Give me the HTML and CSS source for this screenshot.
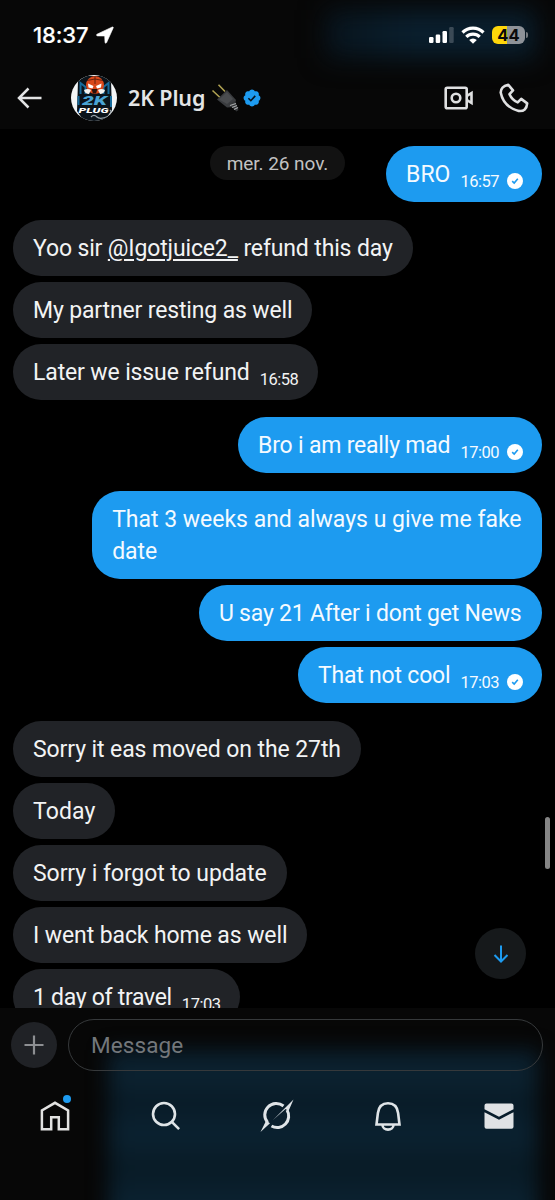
FILE: index.html
```html
<!DOCTYPE html>
<html lang="fr">
<head>
<meta charset="utf-8">
<title>2K Plug</title>
<link rel="stylesheet" href="styles.css">
</head>
<body>
<svg width="0" height="0" class="defs">
  <symbol id="sent" viewBox="0 0 16 16"><circle cx="8" cy="8" r="8" fill="#fff"/><path d="M5.2 8.2 7.2 10.1 10.8 5.8" fill="none" stroke="#1d9bf0" stroke-width="1.6"/></symbol>
</svg>
<div class="app">
  <header class="top">
    <div class="status">
      <span class="clock">18:37</span>
      <svg class="loc" width="18" height="18" viewBox="0 0 18 18"><path d="M1 8.200 16.300 1c.7-.3 1.200.2.900.9L10.600 16.600c-.4.9-1.600.7-1.600-.3L8.700 10 1.600 9.900c-1.100 0-1.500-1.200-.6-1.700z" fill="#fff" stroke="#fff" stroke-width=".6"/></svg>
      <svg class="signal" width="26" height="18" viewBox="0 0 26 18"><g fill="#fff"><rect x="0" y="11" width="4.500" height="6" rx="1.200"/><rect x="6.700" y="8.500" width="4.500" height="8.500" rx="1.200"/><rect x="13.500" y="5" width="4.500" height="12" rx="1.200"/></g><rect x="20.200" y="1" width="4.500" height="16" rx="1.200" fill="#3b4a56"/></svg>
      <svg class="wifi" width="24" height="18" viewBox="0 0 24 18"><g fill="none" stroke="#fff" stroke-width="3.200"><path d="M1.500 6.500a15 15 0 0 1 21 0"/><path d="M5.300 10.900a9.500 9.500 0 0 1 13.400 0"/></g><path d="M12 17.700 8.200 14a5.500 5.500 0 0 1 7.600 0z" fill="#fff"/></svg>
      <div class="battery">44</div><i class="cap"></i>
    </div>
    <div class="bar">
      <svg class="back" width="26" height="22" viewBox="0 0 26 22"><path d="M11.500 1.500 2 11l9.500 9.500M2 11h22.500" fill="none" stroke="#e2e3e4" stroke-width="2.500"/></svg>
      <svg class="avatar" width="46" height="46" viewBox="0 0 46 46">
        <defs><clipPath id="disc"><circle cx="23" cy="23" r="23"/></clipPath></defs>
        <g clip-path="url(#disc)">
          <rect width="46" height="46" fill="#f4f6f7"/>
          <path d="M7 6 15 1h17l8 5 1 29-8 11H13L6 36z" fill="#0b141b"/>
          <path d="M9.500 19V8l5 4v7M37.500 19V8l-5 4v7" fill="none" stroke="#176b9c" stroke-width="2"/>
          <circle cx="24" cy="10" r="9" fill="#d9481a"/>
          <path d="M24 1v8M16 5.500q8-3 16 0" fill="none" stroke="#4a1a0c" stroke-width=".8"/>
          <path d="M17 8.500l5.500 2.500-1 2.500-4-1zM30.500 8.500 25 11l1 2.500 4-1z" fill="#fff"/>
          <path d="M13 15q4-2 7 0l-2 4q-4 0-5-4zM34 15q-4-2-7 0l2 4q4 0 5-4z" fill="#f3f3f0"/>
          <path d="M20.500 14h6l-1.500 4.500h-3z" fill="#2a120c"/>
          <path d="M7.500 21v9M40 21v11" stroke="#176b9c" stroke-width="2"/>
          <text x="11" y="30" class="logo-a" textLength="25" lengthAdjust="spacingAndGlyphs">2K</text>
          <text x="7.500" y="37.500" class="logo-b" textLength="30" lengthAdjust="spacingAndGlyphs">PLUG</text>
          <path d="M20 42q3-3 6 0t12-1q4-3 1-6" fill="none" stroke="#98a2a8" stroke-width="1.200"/>
        </g>
      </svg>
      <span class="name">2K Plug</span>
      <svg class="plug" width="28" height="28" viewBox="0 0 28 28"><path d="M1.500 6.500 9 13.500M7.500.8 14 7.500" stroke="#b0a252" stroke-width="1.600"/><path d="m6 15.500 10-9.500 9 10-2 7-7 .5z" fill="#3a3c3f"/><path d="m8 15.500 8-7.500 6 7-6 5z" fill="#4a4c4f"/><path d="m18 20 6-3 3.500 9-2 1.500z" fill="#343638"/><path d="m19 21.500 6-2m-4 4 5-2m-3 4 4-2" stroke="#a7a9ab" stroke-width="1.300"/></svg>
      <svg class="verified" width="18" height="18" viewBox="1 1 20 20"><path fill="#1d9bf0" d="M20.396 11c-.018-.646-.215-1.275-.57-1.816-.354-.540-.852-.972-1.438-1.246.223-.607.270-1.264.140-1.897-.131-.634-.437-1.218-.882-1.687-.470-.445-1.053-.750-1.687-.882-.633-.130-1.290-.083-1.897.140-.273-.587-.704-1.086-1.245-1.440S11.647 1.620 11 1.604c-.646.017-1.273.213-1.813.568s-.969.854-1.240 1.440c-.608-.223-1.267-.272-1.902-.140-.635.130-1.220.436-1.690.882-.445.470-.749 1.055-.878 1.688-.130.633-.080 1.290.144 1.896-.587.274-1.087.705-1.443 1.245-.356.540-.555 1.170-.574 1.817.020.647.218 1.276.574 1.817.356.540.856.972 1.443 1.245-.224.606-.274 1.263-.144 1.896.130.634.433 1.218.877 1.688.470.443 1.054.747 1.687.878.633.132 1.290.084 1.897-.136.274.586.705 1.084 1.246 1.439.540.354 1.170.551 1.816.569.647-.016 1.276-.213 1.817-.567s.972-.854 1.245-1.440c.604.239 1.266.296 1.903.164.636-.132 1.220-.447 1.680-.907.460-.460.776-1.044.908-1.681s.075-1.299-.165-1.903c.586-.274 1.084-.705 1.439-1.246.354-.540.551-1.170.569-1.816z"/><path d="m7 11.300 2.700 2.700 4.900-5.400" fill="none" stroke="#07131c" stroke-width="1.800"/></svg>
      <svg class="video" width="30" height="24" viewBox="0 0 30 24"><g fill="none" stroke="#dfe0e1" stroke-width="2.600"><rect x="1.700" y="1.700" width="21" height="20.600" rx="1.500"/><circle cx="12" cy="12" r="4.300"/><path d="M23 9.800 27.500 7v10L23 14.200"/></g></svg>
      <svg class="phone" width="30" height="30" viewBox="0 0 30 30"><path d="M9.300 1.800 14 7.400 10.500 11.200q2.500 5.700 8.200 8.200l3.500-3.500 6 4.500q-.7 8.300-8.500 7.500Q4.500 24 1.700 9.500 1.800 3.500 9.300 1.800z" fill="none" stroke="#dfe0e1" stroke-width="2.600" stroke-linejoin="round"/></svg>
    </div>
  </header>
  <main class="thread">
    <div class="day">mer. 26 nov.</div>
    <section class="group mine"><p class="msg m1"><span>BRO</span><time>16:57</time><svg class="tick"><use href="#sent"/></svg></p></section>
    <section class="group"><p class="msg m2"><span>Yoo sir <u>@Igotjuice2_</u> refund this day</span></p><p class="msg m3"><span>My partner resting as well</span></p><p class="msg m4"><span>Later we issue refund</span><time>16:58</time></p></section>
    <section class="group mine"><p class="msg m5"><span>Bro i am really mad</span><time>17:00</time><svg class="tick"><use href="#sent"/></svg></p></section>
    <section class="group mine"><p class="msg m6"><span>That 3 weeks and always u give me fake<br>date</span></p><p class="msg m7"><span>U say 21 After i dont get News</span></p><p class="msg m8"><span>That not cool</span><time>17:03</time><svg class="tick"><use href="#sent"/></svg></p></section>
    <section class="group"><p class="msg m9"><span>Sorry it eas moved on the 27th</span></p><p class="msg m10"><span>Today</span></p><p class="msg m11"><span>Sorry i forgot to update</span></p><p class="msg m12"><span>I went back home as well</span></p><p class="msg m13"><span>1 day of travel</span><time>17:03</time></p></section>
    <i class="scrollbar"></i>
    <div class="jump"><svg width="16" height="18" viewBox="0 0 16 18"><path d="M8 .5v16M1.500 10 8 16.500l6.500-6.500" fill="none" stroke="#1d9bf0" stroke-width="2"/></svg></div>
  </main>
  <footer class="bottom">
    <div class="composer">
      <div class="add"><svg width="20" height="20" viewBox="0 0 20 20"><path d="M10 .5v19M.5 10h19" stroke="#8d8f92" stroke-width="2.200"/></svg></div>
      <div class="field">Message</div>
    </div>
    <nav class="tabs">
      <div class="tab"><svg width="34" height="34" viewBox="0 0 34 34"><path d="M3.900 30.300V11.500L17 3.800l13.100 7.700v18.800h-9.300V18.200h-7.600v12.100z" fill="none" stroke="#e2e2e1" stroke-width="2.500"/></svg><i class="dot"></i></div>
      <div class="tab"><svg width="34" height="34" viewBox="0 0 34 34"><g fill="none" stroke="#dfe4e7" stroke-width="2.600"><circle cx="15" cy="15" r="11"/><path d="m22.800 22.800 7.300 7.300"/></g></svg></div>
      <div class="tab"><svg width="34" height="34" viewBox="0 0 34 34"><g fill="none" stroke="#dfe4e7" stroke-width="3"><path d="M7.600 23.500A11.500 11.500 0 0 1 23.500 7"/><path d="M27 11A11.500 11.500 0 0 1 11.500 27"/></g><path d="M.5 33 6.200 21.500l3.800 2.800zM13 21 33.500.5 28.500 12l-3-2z" fill="#dfe4e7"/></svg></div>
      <div class="tab"><svg width="34" height="34" viewBox="0 0 34 34"><path d="M5.500 25.500 6.900 14c.8-6.500 4.500-9.800 10.100-9.800s9.300 3.300 10.100 9.800l1.400 11.500z" fill="none" stroke="#dfe4e7" stroke-width="2.600"/><path d="M11.500 26a5.500 4.600 0 0 0 11 0" fill="none" stroke="#dfe4e7" stroke-width="2.600"/></svg></div>
      <div class="tab"><svg width="34" height="34" viewBox="0 0 34 34"><path d="M2.500 6.500q0-2 2-2h25q2 0 2 2v3.700L17 17.700 2.500 10.200z M2.500 13.200 17 20.800l14.500-7.600v14.600q0 2-2 2h-25q-2 0-2-2z" fill="#e0e2e4"/></svg></div>
    </nav>
  </footer>
</div>
</body>
</html>
```
FILE: styles.css
```css
* { box-sizing: border-box; }
body { margin: 0; background: #000; font-family: Roboto, "Liberation Sans", sans-serif; color: #f2f3f4; }
.defs { position: absolute; }
.app { display: flex; flex-direction: column; width: 555px; height: 1200px; overflow: hidden; }

/* header */
.top { position: relative; height: 129px; background: #070707; overflow: hidden; }
.top::before { content: ""; position: absolute; left: 325px; top: 10px; width: 210px; height: 48px; background: linear-gradient(90deg, #08141d, #0a1f2e 40%); filter: blur(13px); }
.status { position: relative; display: flex; align-items: center; height: 70px; padding: 0 27px 0 33px; }
.clock { font: 500 22px Inter, sans-serif; letter-spacing: -.1px; color: #fff; -webkit-text-stroke: .2px #fff; }
.loc { margin-left: 7px; }
.signal { margin-left: auto; }
.wifi { margin-left: 6px; }
.battery { width: 33px; height: 18px; margin-left: 7px; border-radius: 6px; background: linear-gradient(90deg, #ffd60a 44%, #8e9298 44%); color: #090909; font: 700 16.500px/18px Inter, sans-serif; text-align: center; }
.cap { width: 2px; height: 6px; margin-left: 1px; border-radius: 0 2px 2px 0; background: #777b80; }
.bar { position: relative; display: flex; align-items: center; height: 56px; padding: 0 26px 0 17px; }
.avatar { margin-left: 28px; }
.name { width: 77px; margin: -1px 0 0 11px; font: 600 21.500px "Noto Sans", sans-serif; letter-spacing: -.15px; color: #e4e5e6; white-space: nowrap; }
.plug { margin-left: 6px; }
.verified { margin-left: 4px; }
.video { margin-left: auto; }
.phone { margin-left: 25px; }
.logo-a { font: italic 900 12px Roboto, sans-serif; fill: #49a4d4; }
.logo-b { font: italic 900 8px Roboto, sans-serif; fill: #fff; }

/* conversation */
.thread { position: relative; height: 879px; padding: 17px 13px 0; overflow: hidden; }
.day { position: absolute; left: 210px; top: 17px; width: 135px; height: 34px; border-radius: 17px; background: #121212; color: #c2c2c2; font-size: 19px; line-height: 35px; letter-spacing: -.05px; text-align: center; }
.group { display: flex; flex-direction: column; align-items: flex-start; gap: 6.100px; margin-bottom: 17.600px; }
.mine { align-items: flex-end; }
.msg { display: flex; align-items: flex-end; flex: none; margin: 0; padding: 13px 20px 11px; border-radius: 28px; background: #212327; font-size: 23px; line-height: 32px; white-space: nowrap; letter-spacing: -.1px; }
.mine .msg { background: #1d9bf0; color: #f4faff; padding-right: 19px; }
.msg time { margin-left: 10px; font-size: 16.500px; line-height: 19px; letter-spacing: -.5px; }
.tick { width: 16px; height: 16px; margin: 0 0 2px 8px; }
.m1 { letter-spacing: 0; }
.m2, .m3 { letter-spacing: -.145px; }
.m4 { letter-spacing: -.13px; }
.m5, .m8 { letter-spacing: -.2px; }
.m6 { letter-spacing: -.01px; }
.m7 { letter-spacing: -.2px; }
.mine .m6, .mine .m7 { padding-right: 20.500px; }
.m10 { letter-spacing: .1px; }
.m11 { letter-spacing: -.07px; }
.m13 { letter-spacing: -.3px; }
u { text-decoration-thickness: 2px; text-underline-offset: 3px; }
.scrollbar { position: absolute; right: 5px; top: 688px; width: 5px; height: 52px; border-radius: 3px; background: #858585; }
.jump { position: absolute; left: 475px; top: 799px; width: 51px; height: 51px; display: grid; place-items: center; border-radius: 50%; background: #16191b; }

/* composer and tab bar */
.bottom { position: relative; height: 192px; background: #070707; overflow: hidden; }
.bottom::before { content: ""; position: absolute; left: 108px; top: 42px; width: 430px; height: 190px; background: linear-gradient(#0a1f2d, #0c2230 16%, #081a26 27%, #0b2231 44%, #081a25 62%, #0b2231 82%); clip-path: polygon(0 0, 100% 0, 100% 100%, 14px 100%, 14px 25%, 0 25%); }
.bottom::before { filter: blur(10px); clip-path: none; }
.composer { position: relative; display: flex; align-items: center; gap: 11px; padding: 11px 12px 0 11px; }
.add { width: 46px; height: 46px; display: grid; place-items: center; border-radius: 50%; background: #202226; }
.field { flex: 1; height: 52px; padding: 0 0 0 22px; border: 1px solid #36393b; border-radius: 26px; color: #73777b; font-size: 22.500px; letter-spacing: .1px; line-height: 50px; }
.tabs { position: relative; display: grid; grid-template-columns: repeat(5, 1fr); margin-top: 28px; }
.tab { position: relative; display: flex; justify-content: center; }
.tab svg { margin-left: -1px; }
.dot { position: absolute; left: 63px; top: -4px; width: 8px; height: 8px; border-radius: 50%; background: #1d9bf0; }
```
